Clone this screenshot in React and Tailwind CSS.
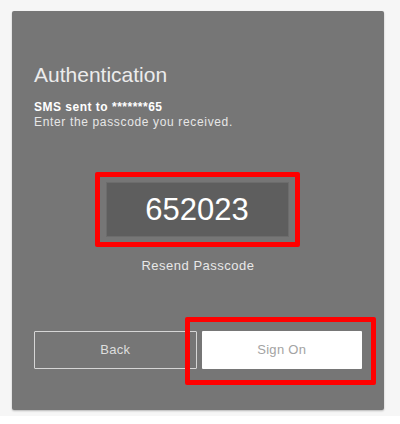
import React, { useState } from 'react';

const App = () => {
    const [code, setCode] = useState('652023');

    return (
        <div className="w-[400px] h-[424px] bg-white" style={{ fontFamily: '"Liberation Sans", Arial, sans-serif' }}>
            <div className="h-[416px] bg-[#f6f6f6] pt-[11px] pl-[12px]">
                <div className="w-[372px] h-[399px] bg-[#767676] rounded-[2px] shadow-[0_1px_2px_rgba(0,0,0,0.25)] px-[22px] pt-[52px] flex flex-col">
                    <h2 className="text-[21px] leading-[24px] text-[#ececec]">Authentication</h2>
                    <p className="mt-[13px] text-[12px] leading-[14px] font-bold text-white tracking-[0.5px]">SMS sent to *******65</p>
                    <p className="mt-[1px] text-[12px] leading-[14px] text-[#e6e6e6] tracking-[0.65px]">Enter the passcode you received.</p>

                    {/* caja del codigo, marcada en rojo */}
                    <div className="mt-[43px] self-center ml-[-2px] border-[5px] border-[#ff0000] rounded-[2px] px-[6px] py-[5px]">
                        <input
                            type="text"
                            value={code}
                            onChange={(e) => setCode(e.target.value)}
                            className="w-[183px] h-[55px] bg-[#5e5e5e] border border-[#6c6c6c] text-center text-white text-[31px] outline-none"
                        />
                    </div>
                    <button className="mt-[11px] self-center text-[13px] leading-[16px] text-[#e8e8e8] tracking-[0.5px]">
                        Resend Passcode
                    </button>

                    <div className="relative mt-[57px] flex gap-[5px]">
                        <button className="w-[163px] h-[38px] border border-[#d6d6d6] rounded-[1px] text-[13px] text-[#dedede] tracking-[0.3px]">
                            Back
                        </button>
                        <button className="w-[161px] h-[38px] bg-white rounded-[1px] text-[13px] text-[#a3a3a3] tracking-[0.3px]">
                            Sign On
                        </button>
                        <div className="absolute left-[151px] top-[-14px] w-[191px] h-[68px] border-[5px] border-[#ff0000] rounded-[2px] pointer-events-none" />
                    </div>
                </div>
            </div>
        </div>
    );
};

export default App;
